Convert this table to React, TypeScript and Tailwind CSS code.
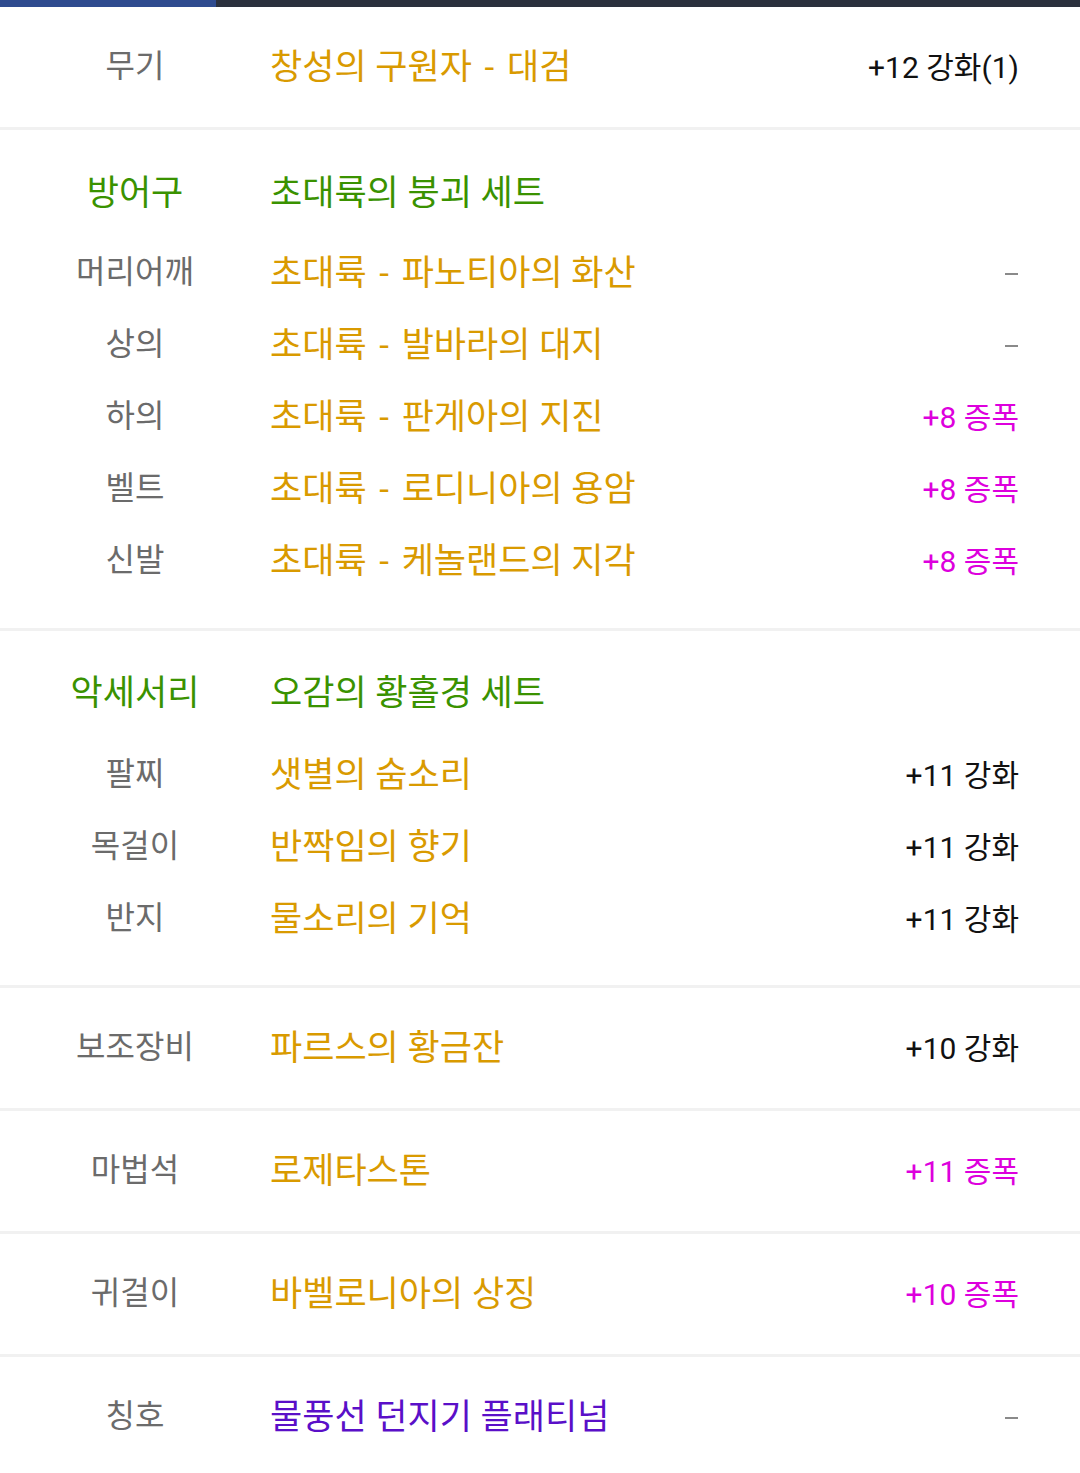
import React from 'react';

// Types
type Tone = 'gold' | 'purple';
type ValueTone = 'black' | 'magenta' | 'dash';

type Item = {
  slot: string;
  name: string;
  tone?: Tone;
  value: string;
  valueTone: ValueTone;
};

type SetGroup = {
  slot: string;
  setName: string;
  items: Item[];
  padTop: string;
  gapAfterHeader: string;
  padBottom: string;
};

const weapon: Item = { slot: '무기', name: '창성의 구원자 - 대검', value: '+12 강화(1)', valueTone: 'black' };

const armor: SetGroup = {
  slot: '방어구',
  setName: '초대륙의 붕괴 세트',
  padTop: 'pt-[27px]',
  gapAfterHeader: 'mt-[8px]',
  padBottom: 'pb-[31px]',
  items: [
    { slot: '머리어깨', name: '초대륙 - 파노티아의 화산', value: '-', valueTone: 'dash' },
    { slot: '상의', name: '초대륙 - 발바라의 대지', value: '-', valueTone: 'dash' },
    { slot: '하의', name: '초대륙 - 판게아의 지진', value: '+8 증폭', valueTone: 'magenta' },
    { slot: '벨트', name: '초대륙 - 로디니아의 용암', value: '+8 증폭', valueTone: 'magenta' },
    { slot: '신발', name: '초대륙 - 케놀랜드의 지각', value: '+8 증폭', valueTone: 'magenta' },
  ],
};

const accessory: SetGroup = {
  slot: '악세서리',
  setName: '오감의 황홀경 세트',
  padTop: 'pt-[26px]',
  gapAfterHeader: 'mt-[10px]',
  padBottom: 'pb-[30px]',
  items: [
    { slot: '팔찌', name: '샛별의 숨소리', value: '+11 강화', valueTone: 'black' },
    { slot: '목걸이', name: '반짝임의 향기', value: '+11 강화', valueTone: 'black' },
    { slot: '반지', name: '물소리의 기억', value: '+11 강화', valueTone: 'black' },
  ],
};

const singles: Item[] = [
  { slot: '보조장비', name: '파르스의 황금잔', value: '+10 강화', valueTone: 'black' },
  { slot: '마법석', name: '로제타스톤', value: '+11 증폭', valueTone: 'magenta' },
  { slot: '귀걸이', name: '바벨로니아의 상징', value: '+10 증폭', valueTone: 'magenta' },
  { slot: '칭호', name: '물풍선 던지기 플래티넘', tone: 'purple', value: '-', valueTone: 'dash' },
];

const nameColor: Record<Tone, string> = {
  gold: 'text-[#d99a00]',
  purple: 'text-[#5a0fc8]',
};

function Value({ value, tone }: { value: string; tone: ValueTone }) {
  if (tone === 'dash') {
    return <span className="block w-[13px] h-[2px] bg-[#8a8a8a] mr-[1px]" />;
  }
  return (
    <span className={tone === 'magenta' ? 'text-[#dd00dd]' : 'text-[#111111]'}>{value}</span>
  );
}

// the game font draws the " - " a bit wider, pad it out
function ItemName({ name }: { name: string }) {
  const parts = name.split(' - ');
  if (parts.length < 2) return <>{name}</>;
  return (
    <>
      {parts[0]}
      <span className="px-[4px]"> - </span>
      {parts[1]}
    </>
  );
}

function Row({ item, tall }: { item: Item; tall?: boolean }) {
  return (
    <div className={`flex items-center ${tall ? 'h-[120px]' : 'h-[72px]'}`}>
      <div className="w-[270px] text-center text-[32px] text-[#6b6b6b] -mt-[3px]">{item.slot}</div>
      <div className={`flex-1 text-[35px] ${nameColor[item.tone ?? 'gold']}`}>
        <ItemName name={item.name} />
      </div>
      <div className="pr-[61px] flex justify-end text-[30px] mt-[2px]">
        <Value value={item.value} tone={item.valueTone} />
      </div>
    </div>
  );
}

function SetSection({ group }: { group: SetGroup }) {
  return (
    <section className={`${group.padTop} ${group.padBottom} border-t-[3px] border-[#f1f1f1]`}>
      <div className="flex items-center h-[72px] text-[35px] text-[#3a9200]">
        <div className="w-[270px] text-center">{group.slot}</div>
        <div className="flex-1">{group.setName}</div>
      </div>
      <div className={group.gapAfterHeader}>
        {group.items.map((item) => (
          <Row key={item.slot} item={item} />
        ))}
      </div>
    </section>
  );
}

export default function App() {
  return (
    <div
      className="w-[1080px] h-[1473px] overflow-hidden bg-white leading-none"
      style={{ fontFamily: "Roboto, 'Noto Sans CJK KR', sans-serif" }}
    >
      {/* Top tab bar */}
      <div className="flex h-[7px]">
        <div className="w-[216px] bg-[#2f4b8f]" />
        <div className="flex-1 bg-[#2b303d]" />
      </div>

      {/* Weapon */}
      <Row item={weapon} tall />

      {/* Set groups */}
      <SetSection group={armor} />
      <SetSection group={accessory} />

      {/* Single slots */}
      {singles.map((item) => (
        <section key={item.slot} className="border-t-[3px] border-[#f1f1f1]">
          <Row item={item} tall />
        </section>
      ))}
    </div>
  );
}
